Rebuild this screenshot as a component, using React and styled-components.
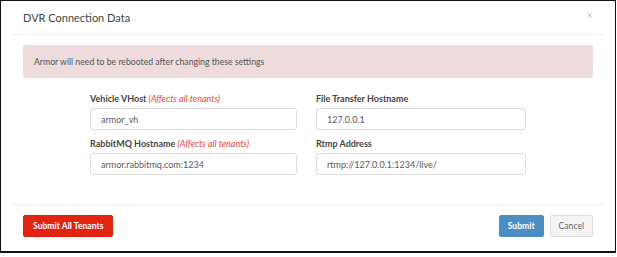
import React from "react";
import styled, { createGlobalStyle } from "styled-components";

const GlobalStyle = createGlobalStyle`
    html, body {
        margin: 0;
        padding: 0;
        background: #fff;
    }
    body {
        font-family: Lato, "Liberation Sans", sans-serif;
        color: #555;
    }
`

const Frame = styled.div`
    box-sizing: border-box;
    width: 616px;
    height: 253px;
    border: 1px solid #111;
    border-bottom-width: 2px;
    background: #fff;
`

const Modal = styled.div`
    margin: 0 12px;
    display: flex;
    flex-direction: column;
`

const Header = styled.div`
    height: 33px;
    padding: 0 10px;
    display: flex;
    align-items: center;
    justify-content: space-between;
    border-bottom: 1px solid #eef0f2;
`

const Title = styled.h4`
    margin: 0;
    font-size: 11px;
    font-weight: 400;
    color: #444;
`

const Close = styled.span`
    font-size: 11px;
    color: #c4c4c4;
    line-height: 1;
    margin-top: -6px;
`

const Body = styled.div`
    padding: 10px 10px 0;
`

const Alert = styled.div`
    height: 33px;
    display: flex;
    align-items: center;
    padding: 0 11px;
    background: #efdcdc;
    border-radius: 2px;
    font-size: 8.7px;
    color: #555;
    margin-bottom: 14px;
`

const Form = styled.div`
    display: grid;
    grid-template-columns: 207px 210px;
    column-gap: 19px;
    row-gap: 7px;
    justify-content: center;
    padding-bottom: 29px;
`

const Field = styled.div`
    display: flex;
    flex-direction: column;
    gap: 2px;
`

const Label = styled.label`
    font-size: 9px;
    line-height: 14px;
    font-weight: 700;
    color: #444;
`

const Note = styled.em`
    font-weight: 400;
    color: #e5483f;
`

const Input = styled.div`
    box-sizing: border-box;
    height: 22px;
    border: 1px solid #dcdcdc;
    border-radius: 3px;
    padding: 0 10px;
    display: flex;
    align-items: center;
    font-size: 9px;
    color: #5a5a5a;
`

const Footer = styled.div`
    border-top: 1px solid #eef0f2;
    padding: 10px 10px 0;
    display: flex;
    align-items: center;
    gap: 6px;
`

const Button = styled.button`
    box-sizing: border-box;
    height: 22px;
    padding: 0 ${p => p.pad || 8}px;
    border-radius: 2px;
    font-family: inherit;
    font-size: 8.6px;
    font-weight: ${p => (p.light ? 400 : 700)};
    background: ${p => p.bg};
    color: ${p => (p.light ? "#666" : "#fff")};
    border: 1px solid ${p => p.line || p.bg};
    margin-left: ${p => (p.push ? "auto" : "0")};
`

const fields = [
    { label: "Vehicle VHost", note: true, value: "armor_vh" },
    { label: "File Transfer Hostname", value: "127.0.0.1" },
    { label: "RabbitMQ Hostname", note: true, value: "armor.rabbitmq.com:1234" },
    { label: "Rtmp Address", value: "rtmp://127.0.0.1:1234/live/" },
]

export default () => {
    return (
        <Frame>
            <GlobalStyle />
            <Modal>
                <Header>
                    <Title>DVR Connection Data</Title>
                    <Close>×</Close>
                </Header>
                <Body>
                    <Alert>Armor will need to be rebooted after changing these settings</Alert>
                    <Form>
                        {fields.map(f => (
                            <Field key={f.label}>
                                <Label>
                                    {f.label}
                                    {f.note && <Note> (Affects all tenants)</Note>}
                                </Label>
                                <Input>{f.value}</Input>
                            </Field>
                        ))}
                    </Form>
                </Body>
                <Footer>
                    <Button bg="#e2230f" pad={9}>Submit All Tenants</Button>
                    <Button bg="#4b8ec4" push>Submit</Button>
                    <Button bg="#f4f4f4" line="#dcdcdc" light>Cancel</Button>
                </Footer>
            </Modal>
        </Frame>
    )
}
